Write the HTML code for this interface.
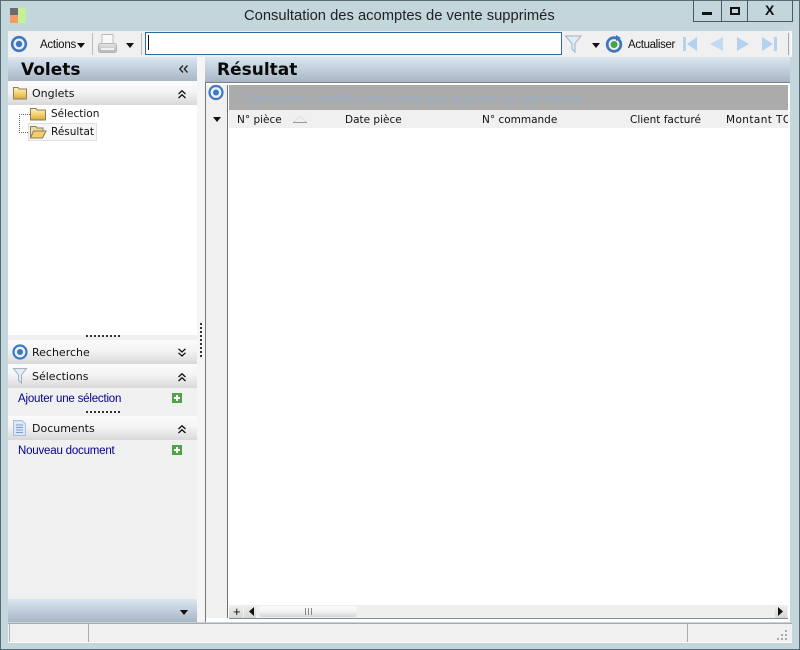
<!DOCTYPE html>
<html><head><meta charset="utf-8"><style>
html,body{margin:0;padding:0}
body{width:800px;height:650px;position:relative;overflow:hidden;background:#c3d6dc;font-family:"DejaVu Sans",sans-serif;font-size:10.5px;color:#111}
.a{position:absolute}
.t{position:absolute;white-space:nowrap;line-height:14px}
.l{font-family:"Liberation Sans",sans-serif}
.s{font-size:11px}
.h{position:absolute;left:8px;width:189px;height:24px;background:linear-gradient(#fbfbfb,#f4f4f4 45%,#d8d8d8)}
.g{position:absolute;background:linear-gradient(#dbe6f1,#c8d5e2 35%,#a8b5c2)}
.b{font-size:17px;line-height:20px;font-weight:bold;color:#0a0a0a}
svg{position:absolute;overflow:visible}
</style></head><body>
<svg width="0" height="0" style="left:0;top:0"><defs><linearGradient id="fo" x1="0" y1="0" x2="0" y2="1"><stop offset="0" stop-color="#fff3c4"/><stop offset=".55" stop-color="#f2cf6c"/><stop offset="1" stop-color="#d9a83e"/></linearGradient><linearGradient id="pr" x1="0" y1="0" x2="0" y2="1"><stop offset="0" stop-color="#e6e6e6"/><stop offset="1" stop-color="#b4b4b4"/></linearGradient></defs></svg>
<div class="a" style="left:0;top:0;width:798px;height:648px;border:1px solid #5b6b75"></div>
<div class="a" style="left:10px;top:8px;width:8px;height:7px;background:#6b6b6b"></div>
<div class="a" style="left:10px;top:15px;width:8px;height:8px;background:#f29a68"></div>
<div class="a" style="left:18px;top:8px;width:8px;height:15px;background:#c5f09a"></div>
<div class="t l" style="left:244px;top:8px;font-size:14.75px;line-height:16px;color:#222">Consultation des acomptes de vente supprimés</div>
<div class="a" style="left:693px;top:0;width:98px;height:21px;border:1px solid #4d5a62;border-top:0"></div>
<div class="a" style="left:721px;top:0;width:1px;height:21px;background:#4d5a62"></div>
<div class="a" style="left:747px;top:0;width:1px;height:21px;background:#4d5a62"></div>
<div class="a" style="left:702px;top:12px;width:10px;height:3px;background:#111"></div>
<div class="a" style="left:730px;top:7px;width:6px;height:4px;border:2px solid #111"></div>
<div class="t l" style="left:765px;top:3px;font-size:14px;font-weight:bold">X</div>

<!-- toolbar -->
<div class="a" style="left:8px;top:31px;width:783px;height:26px;background:#f0f0f0;border-right:1px solid #fff"></div>
<svg style="left:10px;top:35px" width="18" height="18"><circle cx="9" cy="9" r="6.8" fill="#eaf1fa" stroke="#3f78c2" stroke-width="2.6"/><circle cx="9" cy="9" r="3.2" fill="#3f78c2"/></svg>
<div class="t l" style="left:40px;top:38px;font-size:11.5px;letter-spacing:-.25px">Actions</div>
<svg style="left:77px;top:43px" width="8" height="5"><path d="M0 0H8L4 5Z" fill="#111"/></svg>
<div class="a" style="left:92px;top:33px;width:1px;height:22px;background:#bbb"></div>
<svg style="left:97px;top:34px" width="20" height="20"><rect x="5" y=".5" width="11" height="9" fill="#f8f8f8" stroke="#bbb"/><rect x="1.500" y="9.500" width="18" height="9" rx="2" fill="url(#pr)" stroke="#b5b5b5"/><rect x="4" y="14" width="13" height="2" fill="#f2f2f2"/></svg>
<svg style="left:126px;top:43px" width="8" height="5"><path d="M0 0H8L4 5Z" fill="#111"/></svg>
<div class="a" style="left:141px;top:33px;width:1px;height:22px;background:#bbb"></div>
<div class="a" style="left:145px;top:32px;width:415px;height:21px;background:#fff;border:1px solid #2f6a9c"></div>
<div class="a" style="left:148px;top:35px;width:1px;height:15px;background:#111"></div>
<svg style="left:565px;top:35px" width="17" height="18"><path d="M.5 1H16L10 8.500V17L7 14V8.500Z" fill="#e4ecf3" stroke="#9db2c6"/></svg>
<svg style="left:592px;top:43px" width="8" height="5"><path d="M0 0H8L4 5Z" fill="#111"/></svg>
<svg style="left:605px;top:35px" width="18" height="18"><circle cx="9" cy="9.500" r="6.800" fill="none" stroke="#3c78bd" stroke-width="2.800"/><circle cx="9" cy="9.500" r="3.500" fill="#4da04a"/><path d="M11 0L16 3L11 6Z" fill="#3c78bd"/></svg>
<div class="t l" style="left:628px;top:38px;font-size:11.5px;letter-spacing:-.35px">Actualiser</div>
<svg style="left:683px;top:37px" width="100" height="14"><path d="M0 0H3V14H0ZM14 0V14L4 7Z" fill="#b4d2ee"/><path d="M40 0V14L27 7Z" fill="#c3dbf1"/><path d="M54 0V14L66 7Z" fill="#b4d2ee"/><path d="M79 0V14L90 7ZM91 0H94V14H91Z" fill="#b4d2ee"/></svg>
<div class="a" style="left:788px;top:33px;width:1px;height:22px;background:#aaa"></div>

<!-- left panel -->
<div class="a" style="left:8px;top:57px;width:189px;height:565px;background:#f0f0f0"></div>
<div class="a" style="left:197px;top:57px;width:8px;height:565px;background:#f5f5f5"></div>
<div class="g" style="left:8px;top:57px;width:189px;height:24px"></div>
<div class="t b" style="left:21px;top:60px">Volets</div>
<svg style="left:179px;top:65px" width="10" height="9" fill="none" stroke="#222" stroke-width="1.300"><path d="M4 .5L.8 4L4 7.500M8.500 .5L5.300 4L8.500 7.500"/></svg>
<div class="h" style="top:81px"></div>
<svg style="left:13px;top:86px" width="14" height="14"><path d="M.5 1.500H5L6 3H13.500V13H.5Z" fill="url(#fo)" stroke="#8c7c5a"/></svg>
<div class="t s" style="left:32px;top:87px">Onglets</div>
<svg style="left:178px;top:90px" width="9" height="9" fill="none" stroke="#111" stroke-width="1.300"><path d="M.5 4L4 .8L7.500 4M.5 8L4 4.800L7.500 8"/></svg>
<div class="a" style="left:8px;top:105px;width:189px;height:230px;background:#fff"></div>
<svg style="left:19px;top:114px" width="12" height="20" fill="none" stroke="#666" stroke-dasharray="1 1" shape-rendering="crispEdges"><path d="M.5 0V18M0 .5H11M0 18.500H11"/></svg>
<div class="a" style="left:28px;top:123px;width:67px;height:16px;background:#f7f7f7;border:1px solid #e0e0e0"></div>
<svg style="left:30px;top:107px" width="16" height="14"><path d="M.5 1.500H6L7 3H15.500V13H.5Z" fill="url(#fo)" stroke="#8c7c5a"/></svg>
<svg style="left:30px;top:125px" width="17" height="14"><path d="M.5 1.500H6L7 3H13V6H4L.5 13Z" fill="#f0dca0" stroke="#8c7c5a"/><path d="M3.500 6H16L12.500 13H.5Z" fill="#f2cf6c" stroke="#8c7c5a"/></svg>
<div class="t" style="left:51px;top:107px">Sélection</div>
<div class="t" style="left:51px;top:125px">Résultat</div>
<div class="a" style="left:86px;top:335px;width:34px;height:2px;background:repeating-linear-gradient(90deg,#333 0 2px,transparent 2px 4px)"></div>
<div class="a" style="left:200px;top:323px;width:2px;height:34px;background:repeating-linear-gradient(#333 0 2px,transparent 2px 4px)"></div>
<div class="h" style="top:340px"></div>
<svg style="left:12px;top:344px" width="16" height="16"><circle cx="8" cy="8" r="6.500" fill="#eaf1fa" stroke="#3f78c2" stroke-width="2.200"/><circle cx="8" cy="8" r="3" fill="#3f78c2"/></svg>
<div class="t s" style="left:32px;top:346px">Recherche</div>
<svg style="left:178px;top:348px" width="9" height="9" fill="none" stroke="#111" stroke-width="1.300"><path d="M.5 .8L4 4L7.500 .8M.5 4.800L4 8L7.500 4.800"/></svg>
<div class="h" style="top:364px"></div>
<svg style="left:13px;top:368px" width="15" height="16"><path d="M.5 .5H13.500L8.500 7V15L5.500 12V7Z" fill="#e4ecf3" stroke="#9db2c6"/></svg>
<div class="t s" style="left:32px;top:370px">Sélections</div>
<svg style="left:178px;top:373px" width="9" height="9" fill="none" stroke="#111" stroke-width="1.300"><path d="M.5 4L4 .8L7.500 4M.5 8L4 4.800L7.500 8"/></svg>
<div class="t l" style="left:18px;top:392px;color:#00008b;font-size:11.5px;letter-spacing:-.2px">Ajouter une sélection</div>
<svg style="left:172px;top:393px" width="10" height="10"><rect width="10" height="10" fill="#4ea346"/><path d="M5 2V8M2 5H8" stroke="#fff" stroke-width="2"/></svg>
<div class="a" style="left:86px;top:411px;width:34px;height:2px;background:repeating-linear-gradient(90deg,#333 0 2px,transparent 2px 4px)"></div>
<div class="h" style="top:416px"></div>
<svg style="left:13px;top:420px" width="13" height="16"><path d="M.5 .5H9L12.500 4V15.500H.5Z" fill="#dce7f7" stroke="#a9bcd8"/><path d="M3 5H10M3 7.500H10M3 10H10M3 12.500H10" stroke="#7e9cca"/></svg>
<div class="t s" style="left:32px;top:422px">Documents</div>
<svg style="left:178px;top:425px" width="9" height="9" fill="none" stroke="#111" stroke-width="1.300"><path d="M.5 4L4 .8L7.500 4M.5 8L4 4.800L7.500 8"/></svg>
<div class="t l" style="left:18px;top:444px;color:#00008b;font-size:11.5px;letter-spacing:-.2px">Nouveau document</div>
<svg style="left:172px;top:445px" width="10" height="10"><rect width="10" height="10" fill="#4ea346"/><path d="M5 2V8M2 5H8" stroke="#fff" stroke-width="2"/></svg>
<div class="g" style="left:8px;top:599px;width:189px;height:23px"></div>
<svg style="left:180px;top:610px" width="8" height="5"><path d="M0 0H8L4 5Z" fill="#111"/></svg>

<!-- right panel -->
<div class="g" style="left:205px;top:57px;width:585px;height:25px"></div>
<div class="t b" style="left:217px;top:60px">Résultat</div>
<div class="a" style="left:205px;top:82px;width:585px;height:540px;background:#fff"></div>
<div class="a" style="left:205px;top:82px;width:585px;height:1px;background:#7a8186"></div>
<div class="a" style="left:205px;top:82px;width:1px;height:540px;background:#777"></div>
<div class="a" style="left:206px;top:85px;width:21px;height:533px;background:#f0f0f0"></div>
<div class="a" style="left:227px;top:85px;width:1px;height:533px;background:#707070"></div>
<svg style="left:208px;top:85px" width="16" height="16"><circle cx="8" cy="7.500" r="6.500" fill="#eaf1fa" stroke="#3f78c2" stroke-width="2.200"/><circle cx="8" cy="7.500" r="3" fill="#3f78c2"/></svg>
<svg style="left:213px;top:117px" width="8" height="5"><path d="M0 0H8L4 5Z" fill="#111"/></svg>
<div class="a" style="left:229px;top:85px;width:559px;height:25px;background:#ababab;overflow:hidden"></div>
<div class="t l" style="left:246px;top:92px;color:#9aaec8;font-size:10.7px">Faire glisser ici l'entête d'une colonne pour regrouper sur cette colonne</div>
<div class="a" style="left:229px;top:110px;width:559px;height:18px;background:#f0f0f0;overflow:hidden">
<div class="t" style="left:8px;top:3px">N° pièce</div>
<svg style="left:64px;top:5px" width="15" height="8" fill="none"><path d="M0 7.500L7 1L14 7.500" stroke="#ddd"/><path d="M0 7.500H14" stroke="#999"/></svg>
<div class="t" style="left:116px;top:3px">Date pièce</div>
<div class="t" style="left:253px;top:3px">N° commande</div>
<div class="t" style="left:401px;top:3px">Client facturé</div>
<div class="t" style="left:497px;top:3px;letter-spacing:.4px">Montant TOTAL</div>
</div>
<div class="a" style="left:229px;top:605px;width:559px;height:13px;background:#efefef"></div>
<div class="a" style="left:229px;top:618px;width:559px;height:1px;background:#8a8a8a"></div>
<div class="a" style="left:229px;top:605px;width:14px;height:13px;background:linear-gradient(#f0f0f0,#d6d6d6)"></div>
<div class="t l" style="left:233px;top:605px;font-size:13px">+</div>
<div class="a" style="left:244px;top:605px;width:12px;height:13px;background:linear-gradient(#f0f0f0,#d6d6d6)"></div>
<svg style="left:249px;top:607px" width="6" height="9"><path d="M5 0V9L0 4.500Z" fill="#111"/></svg>
<div class="a" style="left:259px;top:606px;width:98px;height:11px;border-radius:3px;background:linear-gradient(#fbfbfb,#f2f2f2 50%,#d6d6d6)"></div>
<div class="a" style="left:305px;top:608px;width:7px;height:7px;background:repeating-linear-gradient(90deg,#888 0 1px,transparent 1px 3px)"></div>
<div class="a" style="left:775px;top:605px;width:12px;height:13px;background:linear-gradient(#f0f0f0,#d6d6d6)"></div>
<svg style="left:778px;top:607px" width="6" height="9"><path d="M0 0V9L5 4.500Z" fill="#111"/></svg>

<!-- status -->
<div class="a" style="left:8px;top:623px;width:784px;height:1px;background:#aaa"></div>
<div class="a" style="left:8px;top:624px;width:784px;height:18px;background:#f0f0f0;border-bottom:1px solid #fff"></div>
<div class="a" style="left:9px;top:624px;width:1px;height:18px;background:#b4b4b4"></div>
<div class="a" style="left:88px;top:624px;width:1px;height:18px;background:#aaa"></div>
<div class="a" style="left:687px;top:624px;width:1px;height:18px;background:#aaa"></div>
<svg style="left:777px;top:630px" width="12" height="11" fill="#aaa"><rect x="8" y="0" width="2" height="2"/><rect x="4" y="4" width="2" height="2"/><rect x="8" y="4" width="2" height="2"/><rect x="0" y="8" width="2" height="2"/><rect x="4" y="8" width="2" height="2"/><rect x="8" y="8" width="2" height="2"/></svg>
</body></html>
